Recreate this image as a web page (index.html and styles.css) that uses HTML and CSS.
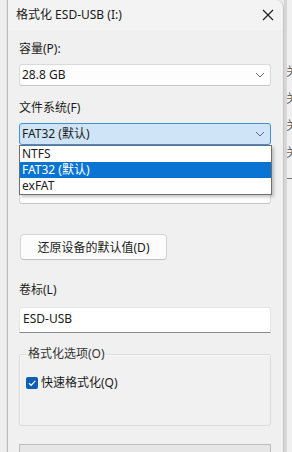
FILE: index.html
```html
<!DOCTYPE html>
<html lang="zh-CN">
<head>
<meta charset="utf-8">
<title>格式化 ESD-USB (I:)</title>
<link rel="stylesheet" href="styles.css">
</head>
<body>
<div class="screen">
  <div class="bg-left"></div>
  <div class="dialog">
    <div class="titlebar">
      <span class="title">格式化 ESD-USB (I:)</span>
      <svg class="close" width="12" height="12" viewBox="0 0 12 12"><path d="M1 1 L11 11 M11 1 L1 11" stroke="#1a1a1a" stroke-width="1.1" fill="none"/></svg>
    </div>
    <div class="content">
      <div class="label first">容量(P):</div>
      <div class="combo">
        <span>28.8 GB</span>
        <svg class="chev" width="10" height="6" viewBox="0 0 10 6"><path d="M1 1 L5 5 L9 1" stroke="#6a6a6a" stroke-width="1" fill="none"/></svg>
      </div>
      <div class="label">文件系统(F)</div>
      <div class="combo-wrap">
        <div class="combo focused">
          <span>FAT32 (默认)</span>
          <svg class="chev" width="10" height="6" viewBox="0 0 10 6"><path d="M1 1 L5 5 L9 1" stroke="#5a6b7a" stroke-width="1" fill="none"/></svg>
        </div>
        <ul class="dropdown">
          <li>NTFS</li>
          <li class="sel">FAT32 (默认)</li>
          <li>exFAT</li>
        </ul>
      </div>
      <div class="label"></div>
      <div class="combo"></div>
      <button class="btn">还原设备的默认值(D)</button>
      <div class="label vol">卷标(L)</div>
      <div class="input">ESD-USB</div>
      <fieldset class="group">
        <legend>格式化选项(O)</legend>
        <div class="check-row">
          <span class="checkbox"><svg width="12" height="12" viewBox="0 0 12 12"><path d="M3 6.2 L5.2 8.3 L9.2 3.9" stroke="#fff" stroke-width="1.2" fill="none"/></svg></span>
          <span>快速格式化(Q)</span>
        </div>
      </fieldset>
      <div class="progress"></div>
    </div>
  </div>
  <div class="bg-right">
    <div class="edge"></div>
    <div class="chars">
      <span>关</span>
      <span>关</span>
      <span>关</span>
      <span>关</span>
      <span class="dash">一</span>
    </div>
  </div>
</div>
</body>
</html>
```
FILE: styles.css
```css
* { box-sizing: border-box; }
html, body { margin: 0; padding: 0; }
body {
  width: 292px;
  height: 452px;
  overflow: hidden;
  background: #ececec;
  font-family: "Noto Sans", "Noto Sans CJK SC", sans-serif;
  font-size: 12px;
  color: #1b1b1b;
}
.screen {
  display: flex;
  height: 452px;
  overflow: hidden;
}
.bg-left {
  width: 7px;
  flex: none;
  background: #eeeeee;
  border-right: 1px solid #e2e2e2;
}
.dialog {
  width: 277px;
  flex: none;
  height: 452px;
  overflow: hidden;
  background: #f0f0f0;
  border-left: 1px solid #bcbcbc;
  border-right: 1px solid #c4c4c4;
  border-top-right-radius: 8px;
  display: flex;
  flex-direction: column;
}
.titlebar {
  flex: none;
  height: 30px;
  display: flex;
  align-items: center;
  justify-content: space-between;
  padding: 0 8px 0 8px;
  background: #f3f3f3;
  border-top-right-radius: 8px;
}
.title {
  font-size: 12px;
  line-height: 16px;
  color: #1a1a1a;
}
.close { display: block; margin-right: 1px; }
.content {
  flex: none;
  padding: 0 11px 0 11px;
  display: flex;
  flex-direction: column;
}
.label {
  flex: none;
  height: 16px;
  line-height: 16px;
  margin-top: 14px;
  margin-bottom: 7px;
}
.label.first { margin-top: 11px; }
.label.vol { margin-top: 22px; margin-bottom: 9px; }
.combo {
  flex: none;
  height: 22px;
  width: 252px;
  background: #fdfdfd;
  border: 1px solid #dadada;
  border-bottom-color: #c6c6c6;
  border-radius: 3px;
  display: flex;
  align-items: center;
  justify-content: space-between;
  padding: 0 5px 0 2px;
  line-height: 16px;
}
.combo.focused {
  background: #cfe5f7;
  border-color: #3f8fd9;
}
.chev { display: block; }
.combo-wrap { position: relative; flex: none; }
.dropdown {
  position: absolute;
  left: 0;
  top: 22px;
  width: 253px;
  margin: 0;
  padding: 0;
  list-style: none;
  background: #ffffff;
  border: 1px solid #6f6f6f;
  box-shadow: 2px 2px 3px rgba(0,0,0,0.22);
  z-index: 2;
}
.dropdown li {
  height: 16px;
  line-height: 16px;
  padding-left: 2px;
}
.dropdown li.sel {
  background: #0a74d2;
  color: #ffffff;
}
.btn {
  flex: none;
  margin-top: 30px;
  align-self: flex-start;
  width: 147px;
  height: 26px;
  margin-left: 1px;
  background: #fcfcfc;
  border: 1px solid #d4d4d4;
  border-bottom-color: #c2c2c2;
  border-radius: 4px;
  font-family: inherit;
  font-size: 12px;
  color: #1b1b1b;
  padding: 0;
}
.input {
  flex: none;
  height: 26px;
  width: 252px;
  background: #ffffff;
  border: 1px solid #e6e6e6;
  border-bottom: 1px solid #8a8a8a;
  border-radius: 3px 3px 0 0;
  padding: 0 3px;
  line-height: 22px;
}
.group {
  flex: none;
  margin: 14px 0 0 0;
  width: 252px;
  border: 1px solid #dcdcdc;
  border-radius: 2px;
  padding: 14px 6px 34px 6px;
  background: #f1f1f1;
  box-shadow: inset 1px 1px 0 #f8f8f8;
}
.group legend {
  padding: 0 1px;
  margin-left: 1px;
  line-height: 14px;
  color: #333;
}
.check-row {
  display: flex;
  align-items: center;
  height: 16px;
  line-height: 16px;
  gap: 3px;
}
.checkbox {
  width: 12px;
  height: 12px;
  border-radius: 2px;
  background: #0d5fb0;
  display: flex;
  align-items: center;
  justify-content: center;
}
.checkbox svg { display: block; }
.progress {
  flex: none;
  margin-top: 18px;
  width: 252px;
  height: 22px;
  border: 1px solid #bcbcbc;
  background: #e6e6e6;
}
.bg-right {
  flex: 1;
  display: flex;
  overflow: hidden;
}
.edge {
  width: 3px;
  flex: none;
  background: #d6d6d6;
}
.chars {
  flex: 1;
  background: #f0f0f0;
  overflow: hidden;
  padding-top: 57px;
  display: flex;
  flex-direction: column;
}
.chars span {
  display: block;
  height: 27px;
  line-height: 27px;
  font-family: "Noto Sans CJK SC", sans-serif;
  font-size: 12px;
  color: #666;
  margin-left: -1px;
  white-space: nowrap;
}
.chars .dash { color: #777; }
```
